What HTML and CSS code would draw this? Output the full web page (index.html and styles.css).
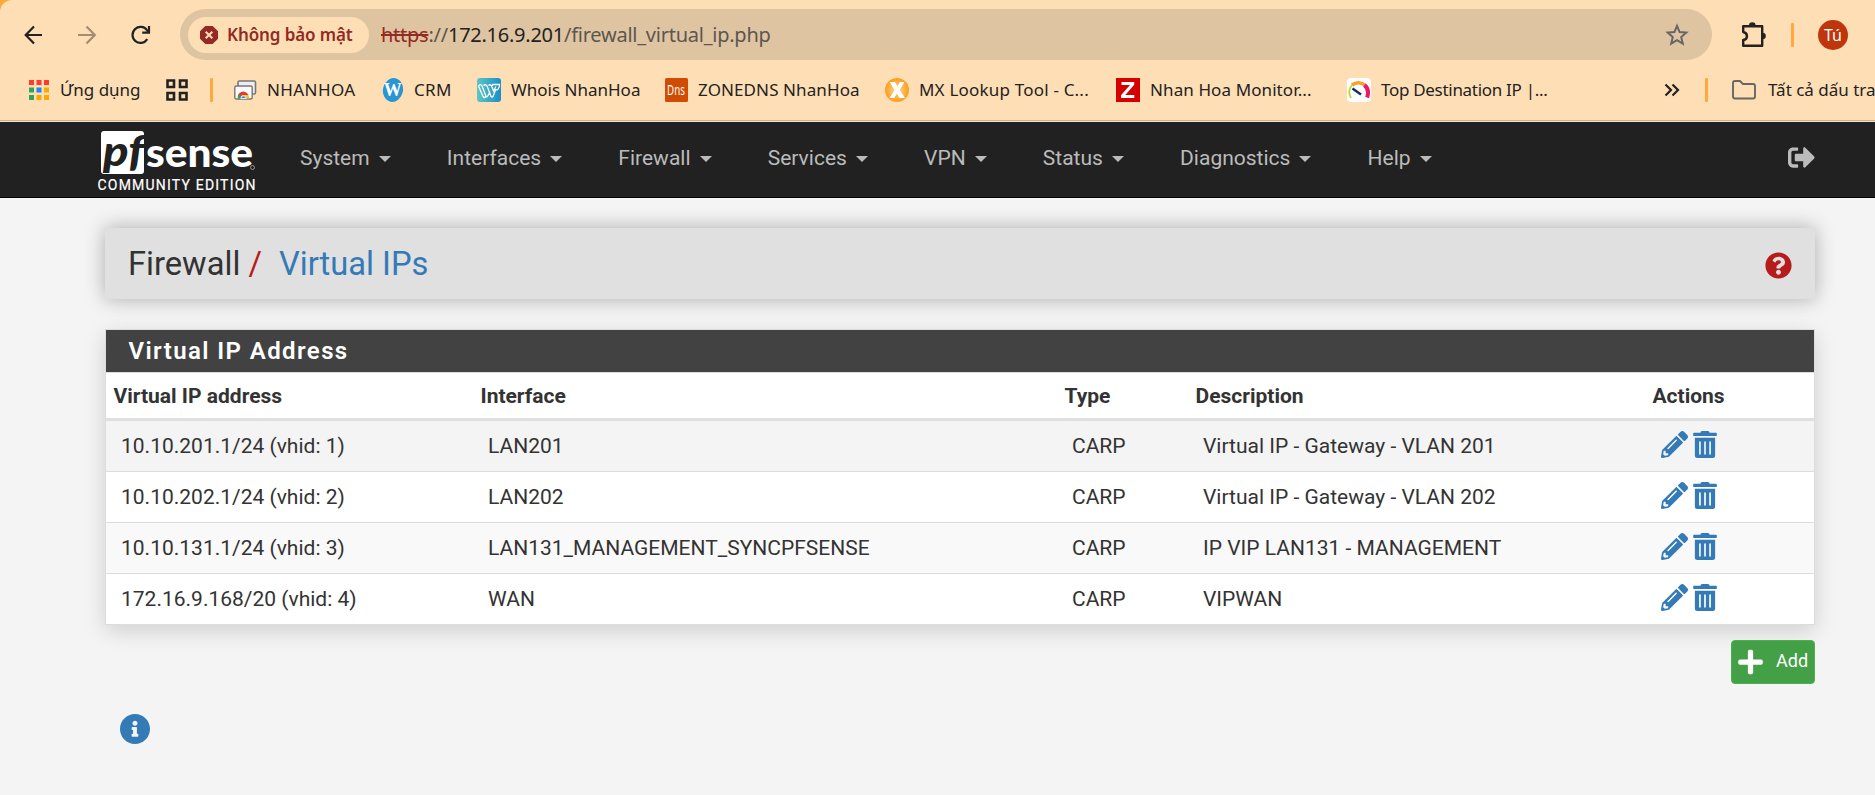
FILE: index.html
```html
<!DOCTYPE html>
<html lang="vi">
<head>
<meta charset="utf-8">
<title>Firewall: Virtual IPs</title>
<link rel="stylesheet" href="styles.css">
</head>
<body>
<svg class="defs" width="0" height="0">
  <symbol id="pencil" viewBox="0 0 512 512"><path d="M497.9 142.1l-46.1 46.1c-4.7 4.7-12.3 4.7-17 0l-111-111c-4.7-4.7-4.7-12.3 0-17l46.1-46.1c18.7-18.7 49.1-18.7 67.9 0l60.1 60.1c18.8 18.7 18.8 49.1 0 67.9zM284.2 99.8L21.6 362.4.4 483.9c-2.9 16.4 11.4 30.6 27.8 27.8l121.5-21.3 262.6-262.6c4.7-4.7 4.7-12.3 0-17l-111-111c-4.8-4.7-12.4-4.7-17.1 0zM124.1 339.9c-5.5-5.5-5.5-14.3 0-19.8l154-154c5.5-5.5 14.3-5.5 19.8 0s5.5 14.3 0 19.8l-154 154c-5.5 5.5-14.3 5.5-19.8 0zM88 424h48v36.3l-64.5 11.3-31.1-31.1L51.7 376H88v48z"/></symbol>
  <symbol id="trash" viewBox="0 0 448 512"><path d="M32 464a48 48 0 0 0 48 48h288a48 48 0 0 0 48-48V128H32zm272-256a16 16 0 0 1 32 0v224a16 16 0 0 1-32 0zm-96 0a16 16 0 0 1 32 0v224a16 16 0 0 1-32 0zm-96 0a16 16 0 0 1 32 0v224a16 16 0 0 1-32 0zM432 32H312l-9.4-18.7A24 24 0 0 0 281.1 0H166.8a23.72 23.72 0 0 0-21.4 13.3L136 32H16A16 16 0 0 0 0 48v32a16 16 0 0 0 16 16h416a16 16 0 0 0 16-16V48a16 16 0 0 0-16-16z"/></symbol>
</svg>

<header class="browser">
  <div class="chrome">
    <div class="toolbar">
      <svg class="tool back" width="20" height="20" viewBox="0 0 20 20"><path d="M18 10H2M10 1.500L1.700 10l8.300 8.500" /></svg>
      <svg class="tool forward" width="20" height="20" viewBox="0 0 20 20"><path d="M1 10h16.500M9.500 1.500L17.800 10l-8.300 8.500"/></svg>
      <svg class="tool reload" width="20" height="20" viewBox="0 0 20 20"><path d="M16.300 14.200A8 8 0 1 1 16 5.200L17.500 7"/><path d="M18 1v6.600h-6.800"/></svg>
      <div class="omnibox">
        <div class="chip">
          <svg width="18" height="18" viewBox="0 0 18 18"><path d="M5.300 0h7.400L18 5.300v7.400L12.700 18H5.300L0 12.700V5.300z" fill="#942a24"/><path d="M5.700 5.700l6.600 6.600M12.300 5.700l-6.600 6.600" stroke="#fedeb5" stroke-width="2"/></svg>
          <span>Không bảo mật</span>
        </div>
        <div class="url"><s>https</s><span class="dim">://</span>172.16.9.201<span class="dim">/firewall_virtual_ip.php</span></div>
        <svg class="star" width="24" height="24" viewBox="0 0 24 24"><path d="M12 2.900l2.600 6.200 6.700.5-5.100 4.400 1.600 6.600L12 17.100l-5.800 3.500 1.600-6.600-5.100-4.400 6.700-.5z"/></svg>
      </div>
      <svg class="puzzle" width="26" height="26" viewBox="0 0 26 26"><path d="M3.200 4.200h19v19.600H3.200V18c5-.5 5-7 0-8z" fill="none" stroke="#222" stroke-width="2.400" stroke-linejoin="round"/><path d="M9 3.600a3.300 3.300 0 0 1 6.600 0zM22.500 10.700a3.300 3.300 0 0 1 0 6.600z" fill="#222"/></svg>
      <i class="sep"></i>
      <div class="avatar">Tú</div>
    </div>
    <nav class="bookmarks">
      <a class="bm apps"><svg width="20" height="20" viewBox="0 0 20 20"><g fill="#ff3b30"><path d="M0 0h5v5H0zM7.500 0h5v5h-5z"/><path d="M15 0h5v5h-5z"/></g><path d="M0 7.500h5v5H0zM0 15h5v5H0z" fill="#34a458"/><path d="M7.500 7.500h5v5h-5z" fill="#1a86fb"/><path d="M15 7.500h5v5h-5zM7.500 15h5v5h-5zM15 15h5v5h-5z" fill="#fba800"/></svg><span>Ứng dụng</span></a>
      <svg class="quad" width="22" height="22" viewBox="0 0 22 22"><path d="M1.500 1.500h6.500v6.500H1.500zM14 1.500h6.500v6.500H14zM1.500 14h6.500v6.500H1.500zM14 14h6.500v6.500H14z" fill="none" stroke="#222" stroke-width="2.600"/></svg>
      <i class="sep first"></i>
      <a class="bm nhanhoa"><svg width="23" height="20" viewBox="0 0 23 20"><rect x="4" y="1" width="17.500" height="13" rx="1.500" fill="#eee" stroke="#777" stroke-width="1.600"/><rect x=".8" y="6" width="17.400" height="13" rx="1.500" fill="#fafafa" stroke="#777" stroke-width="1.400"/><path d="M4 18.500a5.500 5.500 0 0 1 1.500-5.500 5.600 5.600 0 0 1 9 2H9z" fill="#e33b2e"/><path d="M4 18.500a5.500 5.500 0 0 1 1-4.500l4 4.500z" fill="#2ea44f"/><path d="M9.500 18.500h5.500a5.500 5.500 0 0 0-.7-3.500h-5z" fill="#fbc116"/><path d="M6.800 18.500a2.700 2.700 0 0 1 5.400 0z" fill="#4285f4" stroke="#fff" stroke-width=".8"/></svg><span>NHANHOA</span></a>
      <a class="bm crm"><svg width="22" height="24" viewBox="0 0 22 24"><ellipse cx="11" cy="12" rx="10" ry="12" transform="rotate(12 11 12)" fill="#2796d2"/><text class="w" x="11" y="18" text-anchor="middle">W</text></svg><span>CRM</span></a>
      <a class="bm whois"><svg width="24" height="24" viewBox="0 0 24 24"><defs><linearGradient id="teal"><stop stop-color="#5cc6c3"/><stop offset="1" stop-color="#188fc9"/></linearGradient></defs><rect width="24" height="24" rx="3" fill="url(#teal)"/><path d="M1.500 8q2.500-3 4 1l3.500 9.500q1 1 2-1l2-4M1.500 8l4.500 10.500q1.500 2 3 0M6.500 7.500q2.500-2 4 1.500l3.500 9.500q1 1 2 0l2.500-6.500q4 0 4-5.500h-6q-1.500 0-1 1.500M11.500 7.500q2.500-2 3.500 1.500l1.500 4 2.500-4.500" fill="none" stroke="#fff" stroke-width="1.300"/></svg><span>Whois NhanHoa</span></a>
      <a class="bm dns"><svg width="23" height="24" viewBox="0 0 23 24"><rect width="23" height="24" rx="1.500" fill="#d04c02"/><text class="d" x="2" y="17" textLength="18" lengthAdjust="spacingAndGlyphs">Dns</text></svg><span>ZONEDNS NhanHoa</span></a>
      <a class="bm mx"><svg width="24" height="24" viewBox="0 0 24 24"><defs><radialGradient id="sun"><stop stop-color="#ffd894"/><stop offset="1" stop-color="#fb9d1e"/></radialGradient></defs><circle cx="12" cy="12" r="12" fill="url(#sun)"/><path d="M4.500 4H10l2.300 4.200L15 4h4.500l-4.700 7.700L20 20h-5.500L12 15.500 9 20H4.500l5-8z" fill="#fff"/></svg><span>MX Lookup Tool - C...</span></a>
      <a class="bm zab"><svg width="24" height="24" viewBox="0 0 24 24"><path d="M0 0h24v24H0z" fill="#d50000"/><path d="M5.500 4h12.700v2.700L9.300 17h9v3H5v-2.700L14 7H5.500z" fill="#fff"/></svg><span>Nhan Hoa Monitor...</span></a>
      <a class="bm top"><svg width="24" height="24" viewBox="0 0 24 24"><rect width="24" height="24" rx="4" fill="#fff"/><g fill="none"><path d="M4 20Q0 13 5 7" stroke="#b9d632" stroke-width="1.800"/><path d="M5 7q6-4.500 13 0" stroke="#f9a02c" stroke-width="3.500"/><path d="M17.500 7q5.500 5 2.500 12.500" stroke="#ed1768" stroke-width="4"/><path d="M5.500 10.500l8.500 6" stroke="#15305c" stroke-width="2.500"/></g></svg><span>Top Destination IP |...</span></a>
      <svg class="more" width="16" height="14" viewBox="0 0 16 14"><path d="M1.500 1.500L7 7l-5.500 5.500M8.500 1.500L14 7l-5.500 5.500"/></svg>
      <i class="sep second"></i>
      <a class="bm all"><svg width="24" height="20" viewBox="0 0 24 20"><path d="M1 3q0-2 2-2h5l3 3h10q2 0 2 2v10.500q0 2-2 2H3q-2 0-2-2z" fill="none" stroke="#666" stroke-width="1.900"/></svg><span>Tất cả dấu trang</span></a>
    </nav>
  </div>
</header>

<div class="navbar">
  <a class="brand">
    <svg width="160" height="75" viewBox="0 0 160 75">
      <rect x="4" y="9" width="43" height="43" rx="3" fill="#fff"/>
      <text class="pf" x="6" y="43.500" textLength="41" lengthAdjust="spacingAndGlyphs">pf</text>
      <text class="sense" x="49" y="45" textLength="107" lengthAdjust="spacingAndGlyphs">sense</text>
      <circle cx="155.500" cy="45.500" r="2" fill="none" stroke="#aaa" stroke-width=".8"/>
      <text class="edition" x="0.500" y="67.500" textLength="158">COMMUNITY EDITION</text>
    </svg>
  </a>
  <ul class="menu">
    <li>System</li><li>Interfaces</li><li>Firewall</li><li>Services</li><li>VPN</li><li>Status</li><li>Diagnostics</li><li>Help</li>
  </ul>
  <svg class="logout" width="27" height="27" viewBox="0 0 512 512"><path fill="#bbb" d="M497 273L329 441c-15 15-41 4.500-41-17v-96H152c-13.300 0-24-10.700-24-24v-96c0-13.300 10.700-24 24-24h136V88c0-21.400 25.900-32 41-17l168 168c9.300 9.400 9.300 24.600 0 34zM192 436v-40c0-6.600-5.400-12-12-12H96c-17.700 0-32-14.300-32-32V160c0-17.700 14.300-32 32-32h84c6.600 0 12-5.400 12-12V76c0-6.600-5.400-12-12-12H96c-53 0-96 43-96 96v192c0 53 43 96 96 96h84c6.600 0 12-5.400 12-12z"/></svg>
</div>

<main>
  <div class="heading">
    <h1>Firewall<span class="slash">/</span><a>Virtual IPs</a></h1>
    <svg width="27" height="27" viewBox="0 0 512 512"><path fill="#b71c1c" d="M504 256c0 136.997-111.043 248-248 248S8 392.997 8 256C8 119.083 119.043 8 256 8s248 111.083 248 248zM262.655 90c-54.497 0-89.255 22.957-116.549 63.758-3.536 5.286-2.353 12.415 2.715 16.258l34.699 26.310c5.205 3.947 12.621 3.008 16.665-2.122 17.864-22.658 30.113-35.797 57.303-35.797 20.429 0 45.698 13.148 45.698 32.958 0 14.976-12.363 22.667-32.534 33.976C247.128 238.528 216 254.941 216 296v4c0 6.627 5.373 12 12 12h56c6.627 0 12-5.373 12-12v-1.333c0-28.462 83.186-29.647 83.186-106.667 0-58.002-60.165-102-116.531-102zM256 338c-25.365 0-46 20.635-46 46 0 25.364 20.635 46 46 46s46-20.636 46-46c0-25.365-20.635-46-46-46z"/></svg>
  </div>

  <section class="panel">
    <h2>Virtual IP Address</h2>
    <table>
      <colgroup><col class="c1"><col class="c2"><col class="c3"><col class="c4"><col></colgroup>
      <thead><tr><th>Virtual IP address</th><th>Interface</th><th>Type</th><th>Description</th><th>Actions</th></tr></thead>
      <tbody>
        <tr class="hover"><td>10.10.201.1/24 (vhid: 1)</td><td>LAN201</td><td>CARP</td><td>Virtual IP - Gateway - VLAN 201</td><td><div class="actions"><svg class="pen"><use href="#pencil"/></svg><svg class="bin"><use href="#trash"/></svg></div></td></tr>
        <tr><td>10.10.202.1/24 (vhid: 2)</td><td>LAN202</td><td>CARP</td><td>Virtual IP - Gateway - VLAN 202</td><td><div class="actions"><svg class="pen"><use href="#pencil"/></svg><svg class="bin"><use href="#trash"/></svg></div></td></tr>
        <tr class="odd"><td>10.10.131.1/24 (vhid: 3)</td><td>LAN131_MANAGEMENT_SYNCPFSENSE</td><td>CARP</td><td>IP VIP LAN131 - MANAGEMENT</td><td><div class="actions"><svg class="pen"><use href="#pencil"/></svg><svg class="bin"><use href="#trash"/></svg></div></td></tr>
        <tr><td>172.16.9.168/20 (vhid: 4)</td><td>WAN</td><td>CARP</td><td>VIPWAN</td><td><div class="actions"><svg class="pen"><use href="#pencil"/></svg><svg class="bin"><use href="#trash"/></svg></div></td></tr>
      </tbody>
    </table>
  </section>

  <div class="buttons"><a class="add"><svg width="25" height="28" viewBox="0 0 448 512"><path fill="#fff" d="M416 208H272V64c0-17.670-14.330-32-32-32h-32c-17.670 0-32 14.330-32 32v144H32c-17.670 0-32 14.330-32 32v32c0 17.670 14.330 32 32 32h144v144c0 17.670 14.330 32 32 32h32c17.670 0 32-14.330 32-32V304h144c17.670 0 32-14.330 32-32v-32c0-17.670-14.330-32-32-32z"/></svg><span>Add</span></a></div>

  <svg class="info" width="30" height="30" viewBox="8 8 496 496"><path fill="#337ab7" d="M256 8C119.043 8 8 119.083 8 256c0 136.997 111.043 248 248 248s248-111.003 248-248C504 119.083 392.957 8 256 8zm0 110c23.196 0 42 18.804 42 42s-18.804 42-42 42-42-18.804-42-42 18.804-42 42-42zm56 254c0 6.627-5.373 12-12 12h-88c-6.627 0-12-5.373-12-12v-24c0-6.627 5.373-12 12-12h12v-64h-12c-6.627 0-12-5.373-12-12v-24c0-6.627 5.373-12 12-12h64c6.627 0 12 5.373 12 12v100h12c6.627 0 12 5.373 12 12v24z"/></svg>
</main>
</body>
</html>
```
FILE: styles.css
```css
* { box-sizing: border-box; }
html, body { margin: 0; height: 100%; overflow: hidden; }
body { background: #f4f4f4; font: 21px/30px Roboto, sans-serif; color: #333; }
svg { display: block; flex: none; }
.defs { display: none; }

/* Browser chrome */
.browser { height: 122px; background: #ffa93a; font-family: "Noto Sans", sans-serif; }
.chrome { height: 122px; background: #fedeb5; border-radius: 12px 0 0 0; border-bottom: 1px solid #fedeb5; box-shadow: inset 0 -1px #c8b39a; overflow: hidden; }
.toolbar { height: 69px; padding: 0 27px 0 24px; display: flex; align-items: center; }
.tool { fill: none; stroke: #222; stroke-width: 2.2; }
.forward { stroke: #a48d74; margin-left: 33px; }
.reload { margin-left: 34px; }
.omnibox { width: 1532px; flex: none; height: 51px; margin-left: 29px; border-radius: 26px; background: #dfc4a1; display: flex; align-items: center; padding: 0 23px 0 8px; }
.chip { width: 181px; height: 36px; border-radius: 18px; background: #fedeb5; display: flex; align-items: center; padding-left: 12px; gap: 9px; color: #942a24; font-size: 17px; font-weight: 600; white-space: nowrap; letter-spacing: -.1px; }
.url { margin-left: 12px; font-size: 20px; color: #222; letter-spacing: -.25px; white-space: nowrap; }
.url s { color: #942a24; }
.dim { color: #5c5650; }
.star { margin-left: auto; fill: none; stroke: #666; stroke-width: 2; }
.puzzle { margin-left: 28px; }
.sep { width: 3px; height: 24px; border-radius: 1px; background: #ffa83d; flex: none; }
.toolbar .sep { margin-left: 25px; }
.avatar { width: 30px; height: 30px; margin-left: 24px; border-radius: 50%; background: #bf360c; color: #fff; font-size: 16px; line-height: 30px; text-align: center; flex: none; }
.bookmarks { height: 42px; padding-left: 29px; display: flex; align-items: center; color: #222; font-size: 17px; white-space: nowrap; }
.bm { display: flex; align-items: center; flex: none; }
.bm span { margin-left: 10px; }
.apps { width: 137px; }
.apps span { margin-left: 11px; }
.first { margin-left: 22px; }
.nhanhoa { width: 148px; margin-left: 21px; letter-spacing: .4px; }
.crm { width: 95px; letter-spacing: .3px; }
.whois { width: 188px; }
.dns { width: 220px; letter-spacing: .1px; }
.mx { width: 231px; letter-spacing: .2px; }
.zab { width: 231px; letter-spacing: .1px; }
.top { width: 317px; letter-spacing: -.3px; }
.second { margin-left: 25px; }
.all { margin-left: 24px; }
.all span { margin-left: 12px; }
.more { fill: none; stroke: #222; stroke-width: 2.2; }
.w { font: bold 18px "Liberation Serif", serif; fill: #fff; }
.d { font: 14px "Noto Sans", sans-serif; fill: #fff; }

/* Site navigation */
.navbar { height: 76px; background: #212121; border-bottom: 1px solid #000; padding-left: 97px; padding-right: 60px; display: flex; }
.pf { font: italic 900 42px Lato, sans-serif; fill: #212121; }
.sense { font: 900 40px Lato, sans-serif; fill: #fff; }
.edition { font: 400 14px Roboto, sans-serif; fill: #fff; stroke: #fff; stroke-width: .2px; }
.menu { list-style: none; margin: 0 0 0 43px; padding: 21px 0 0; display: flex; gap: 56.2px; color: #bbb; }
.menu li { display: flex; }
.menu li::after { content: ""; margin: 13px 0 0 9px; width: 0; height: 0; border: 6px solid transparent; border-top-color: #bbb; border-bottom: 0; }
.logout { margin: 22px 0 0 auto; }

/* Page content */
main { padding: 30px 60px 0 105px; }
.heading { height: 71px; padding: 0 23px 0 23px; background: #e0e0e0; border-radius: 3px; box-shadow: 0 0 20px rgba(0, 0, 0, .3); display: flex; align-items: center; justify-content: space-between; }
h1 { margin: 1px 0 0; font: 400 32.7px/40px Roboto, sans-serif; }
h1 a { color: #337ab7; }
.slash { color: #b71c1c; margin: 0 17px 0 8px; }
.heading svg { margin-top: 3px; }
.panel { margin-top: 30px; border: 1px solid #ddd; background: #fff; box-shadow: 0 6px 20px rgba(0, 0, 0, .15); }
h2 { margin: 0; height: 42px; padding-left: 22.5px; background: #424242; color: #fff; font: 600 24px/42px Roboto, sans-serif; letter-spacing: 1.4px; }
table { width: 100%; table-layout: fixed; border-collapse: separate; border-spacing: 0; border-top: 1px solid #ddd; }
.c1 { width: 367px; }
.c2 { width: 584px; }
.c3 { width: 131px; }
.c4 { width: 457px; }
th { height: 48px; padding: 0 7.5px 0; text-align: left; font-weight: 700; border-bottom: 3px solid #e0e0e0; }
td { height: 51px; padding: 0 15px; border-bottom: 1px solid #ddd; }
tr:last-child td { border-bottom: 0; height: 50px; }
.hover td { background: #f4f4f4; }
.odd td { background: #f9f9f9; }
.actions { display: flex; gap: 5px; fill: #337ab7; padding: 0 0 3px 1px; }
.pen { width: 27px; height: 27px; }
.bin { width: 24px; height: 27px; }
.buttons { display: flex; justify-content: flex-end; margin-top: 15px; }
.add { width: 84px; height: 44px; border-radius: 4px; border: 1px solid #4caf50; background: #43a047; color: #fff; display: flex; align-items: center; padding-left: 6px; font-size: 18px; }
.add span { margin: -2px 0 0 13px; }
.info { margin: 30px 0 0 15px; }
```
